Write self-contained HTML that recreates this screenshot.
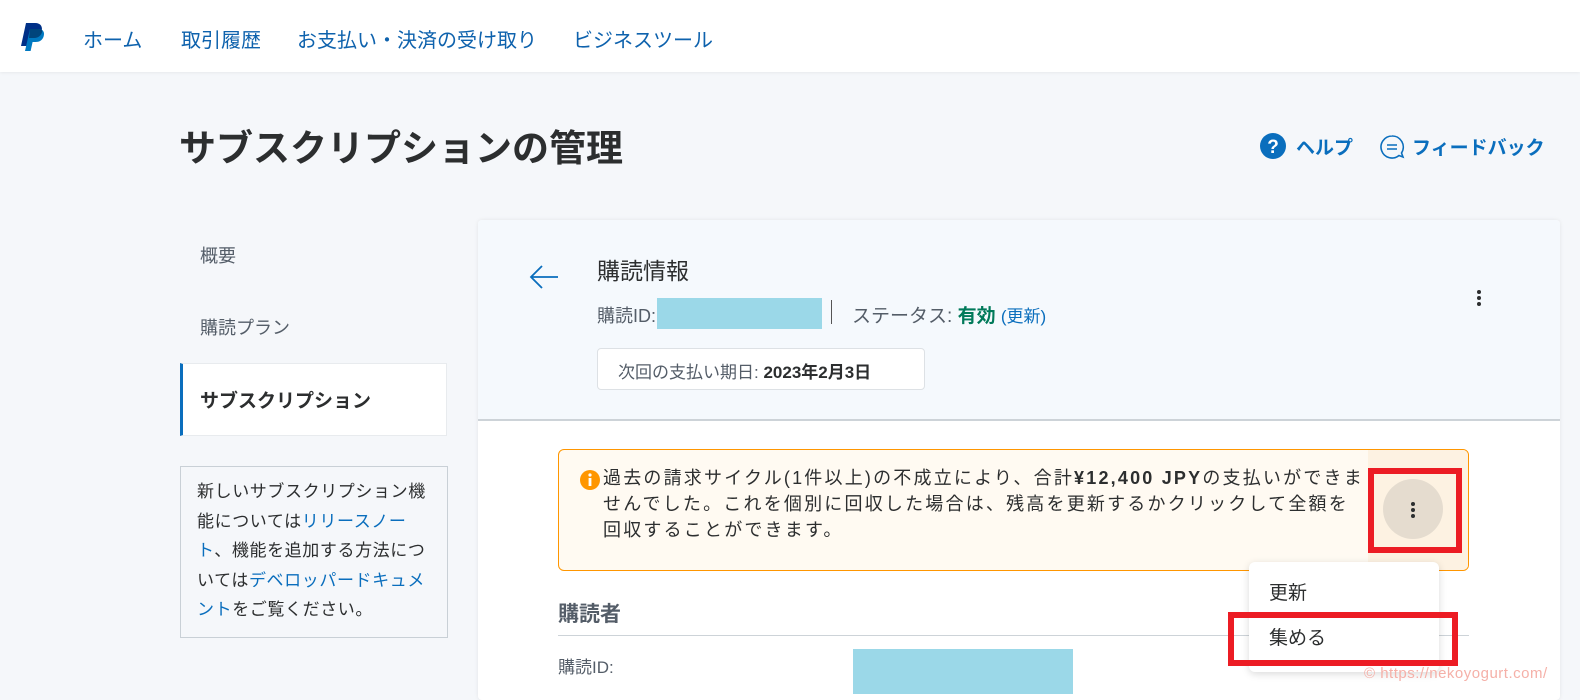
<!DOCTYPE html><html><head><meta charset="utf-8"><style>
*{margin:0;padding:0;box-sizing:border-box}
body{width:1580px;height:694px;overflow:hidden;background:#f5f7fa;font-family:"Liberation Sans","Noto Sans CJK JP",sans-serif;color:#2c2e2f;position:relative}
.a{position:absolute;white-space:nowrap}
.hdr{position:absolute;left:0;top:0;width:1580px;height:72px;background:#fff;box-shadow:0 1px 3px rgba(0,0,0,.06)}
.nav{color:#0e62ad;font-size:20px;top:24px}
.card{position:absolute;left:478px;top:220px;width:1082px;height:480px;background:#fff;box-shadow:0 0 4px rgba(0,0,0,.08);border-radius:4px}
.ch{position:absolute;left:0;top:0;width:1082px;height:201px;background:#f5f9fd;border-bottom:2px solid #cdd3d8;border-radius:4px 4px 0 0}
.dots{width:4px}
.dots i{display:block;width:4px;height:4px;border-radius:2px;background:#2c2e2f;margin-bottom:2px}
</style></head><body>
<div class="hdr"></div>
<svg class="a" style="left:20px;top:22px" width="26" height="30" viewBox="0 0 26 30"><path d="M6 1h9c6 0 8 4 6.5 9-1.3 4.5-5 6-9 6H9l-2 8H1z" fill="#003087"/><path d="M10 7h8c5 0 7 3 5.6 7.5-1.2 4-4.5 5.5-8 5.5h-3l-2 9H5z" fill="#0079c1"/><path d="M10 7h8c2 0 3.4.5 4.3 1.4-.2 4-3 7.6-8.3 7.6H9z" fill="#00457c"/></svg>
<div class="a nav" style="left:83px">ホーム</div>
<div class="a nav" style="left:181px">取引履歴</div>
<div class="a nav" style="left:297px">お支払い・決済の受け取り</div>
<div class="a nav" style="left:573px">ビジネスツール</div>

<div class="a" style="left:179px;top:118px;font-size:37px;font-weight:bold;color:#2c2e2f">サブスクリプションの管理</div>
<svg class="a" style="left:1260px;top:133px" width="26" height="26"><circle cx="13" cy="13" r="13" fill="#0a6ebd"/><text x="13" y="20" font-size="19" font-weight="bold" fill="#fff" text-anchor="middle" font-family="Liberation Sans">?</text></svg>
<div class="a" style="left:1296px;top:133px;font-size:19px;font-weight:bold;color:#0a6ebd">ヘルプ</div>
<svg class="a" style="left:1379px;top:134px" width="26" height="26"><path d="M13 2a11 11 0 1 0 7 19.5l4 1.5-1.5-4A11 11 0 0 0 13 2z" fill="none" stroke="#0a6ebd" stroke-width="1.6"/><path d="M8 11h10M8 15h10" stroke="#0a6ebd" stroke-width="1.6"/></svg>
<div class="a" style="left:1412px;top:133px;font-size:19px;font-weight:bold;color:#0a6ebd">フィードバック</div>

<div class="a" style="left:200px;top:242px;font-size:18px;color:#545d68">概要</div>
<div class="a" style="left:200px;top:314px;font-size:18px;color:#545d68">購読プラン</div>
<div class="a" style="left:180px;top:363px;width:267px;height:73px;background:#fff;border:1px solid #e8ebee;border-left:3px solid #0a6ebd"></div>
<div class="a" style="left:200px;top:386px;font-size:19px;font-weight:bold;color:#2c2e2f">サブスクリプション</div>
<div class="a" style="left:180px;top:466px;width:268px;height:172px;border:1px solid #c9d0d6;padding:10px 0 0 16px;font-size:17px;line-height:29.5px;color:#2c2e2f;letter-spacing:0.6px">新しいサブスクリプション機<br>能については<span style="color:#0a6ebd">リリースノー</span><br><span style="color:#0a6ebd">ト</span>、機能を追加する方法につ<br>いては<span style="color:#0a6ebd">デベロッパードキュメ</span><br><span style="color:#0a6ebd">ント</span>をご覧ください。</div>

<div class="card"><div class="ch"></div></div>
<svg class="a" style="left:528px;top:263px" width="32" height="28"><path d="M30 14H3M14 3L3 14l11 11" fill="none" stroke="#0a6ebd" stroke-width="1.8"/></svg>
<div class="a" style="left:597px;top:252px;font-size:23px;color:#2c2e2f">購読情報</div>
<div class="a" style="left:597px;top:302px;font-size:18px;color:#545d68">購読ID:</div>
<div class="a" style="left:657px;top:298px;width:165px;height:31px;background:#9bd8e8"></div>
<div class="a" style="left:831px;top:300px;width:1px;height:24px;background:#555"></div>
<div class="a" style="left:852px;top:301px;font-size:19px;color:#545d68">ステータス: <b style="color:#017a5a">有効</b> <span style="color:#0a6ebd;font-size:17px">(更新)</span></div>
<div class="a dots" style="left:1477px;top:290px"><i></i><i></i><i></i></div>
<div class="a" style="left:597px;top:348px;width:328px;height:42px;background:#fff;border:1px solid #dde1e5;border-radius:4px;font-size:17px;color:#545d68;padding:9px 0 0 20px">次回の支払い期日: <b style="color:#2c2e2f">2023年2月3日</b></div>

<div class="a" style="left:558px;top:449px;width:911px;height:122px;background:#fffaf2;border:1px solid #ff9600;border-radius:6px;overflow:hidden"><div style="position:absolute;right:0;top:0;width:100px;height:122px;background:#fdf2e2"></div></div>
<svg class="a" style="left:580px;top:470px" width="20" height="20"><circle cx="10" cy="10" r="10" fill="#ff9600"/><rect x="8.6" y="8" width="2.8" height="8" fill="#fff"/><circle cx="10" cy="5" r="1.6" fill="#fff"/></svg>
<div class="a" style="left:603px;top:465px;font-size:18px;line-height:26px;color:#2c2e2f;letter-spacing:2.2px">過去の請求サイクル(1件以上)の不成立により、合計<b>¥12,400 JPY</b>の支払いができま<br>せんでした。これを個別に回収した場合は、残高を更新するかクリックして全額を<br>回収することができます。</div>
<div class="a" style="left:1383px;top:479px;width:60px;height:60px;border-radius:30px;background:#e5dccf"></div>
<div class="a dots" style="left:1411px;top:502px"><i></i><i></i><i></i></div>
<div class="a" style="left:1368px;top:468px;width:94px;height:85px;border:6px solid #ec1c24"></div>

<div class="a" style="left:558px;top:598px;font-size:21px;font-weight:bold;color:#545d68">購読者</div>
<div class="a" style="left:558px;top:635px;width:911px;height:1px;background:#cdd3d8"></div>
<div class="a" style="left:558px;top:653px;font-size:17px;color:#545d68">購読ID:</div>
<div class="a" style="left:853px;top:649px;width:220px;height:45px;background:#9bd8e8"></div>

<div class="a" style="left:1249px;top:562px;width:190px;height:110px;background:#fff;border-radius:6px;box-shadow:0 2px 8px rgba(0,0,0,.15)"></div>
<div class="a" style="left:1269px;top:578px;font-size:19px;color:#2c2e2f">更新</div>
<div class="a" style="left:1269px;top:623px;font-size:19px;color:#2c2e2f">集める</div>
<div class="a" style="left:1228px;top:612px;width:230px;height:54px;border:6px solid #ec1c24"></div>
<div class="a" style="left:1364px;top:665px;font-size:15px;color:#f5b0a8;letter-spacing:0.5px">© https://nekoyogurt.com/</div>
</body></html>
